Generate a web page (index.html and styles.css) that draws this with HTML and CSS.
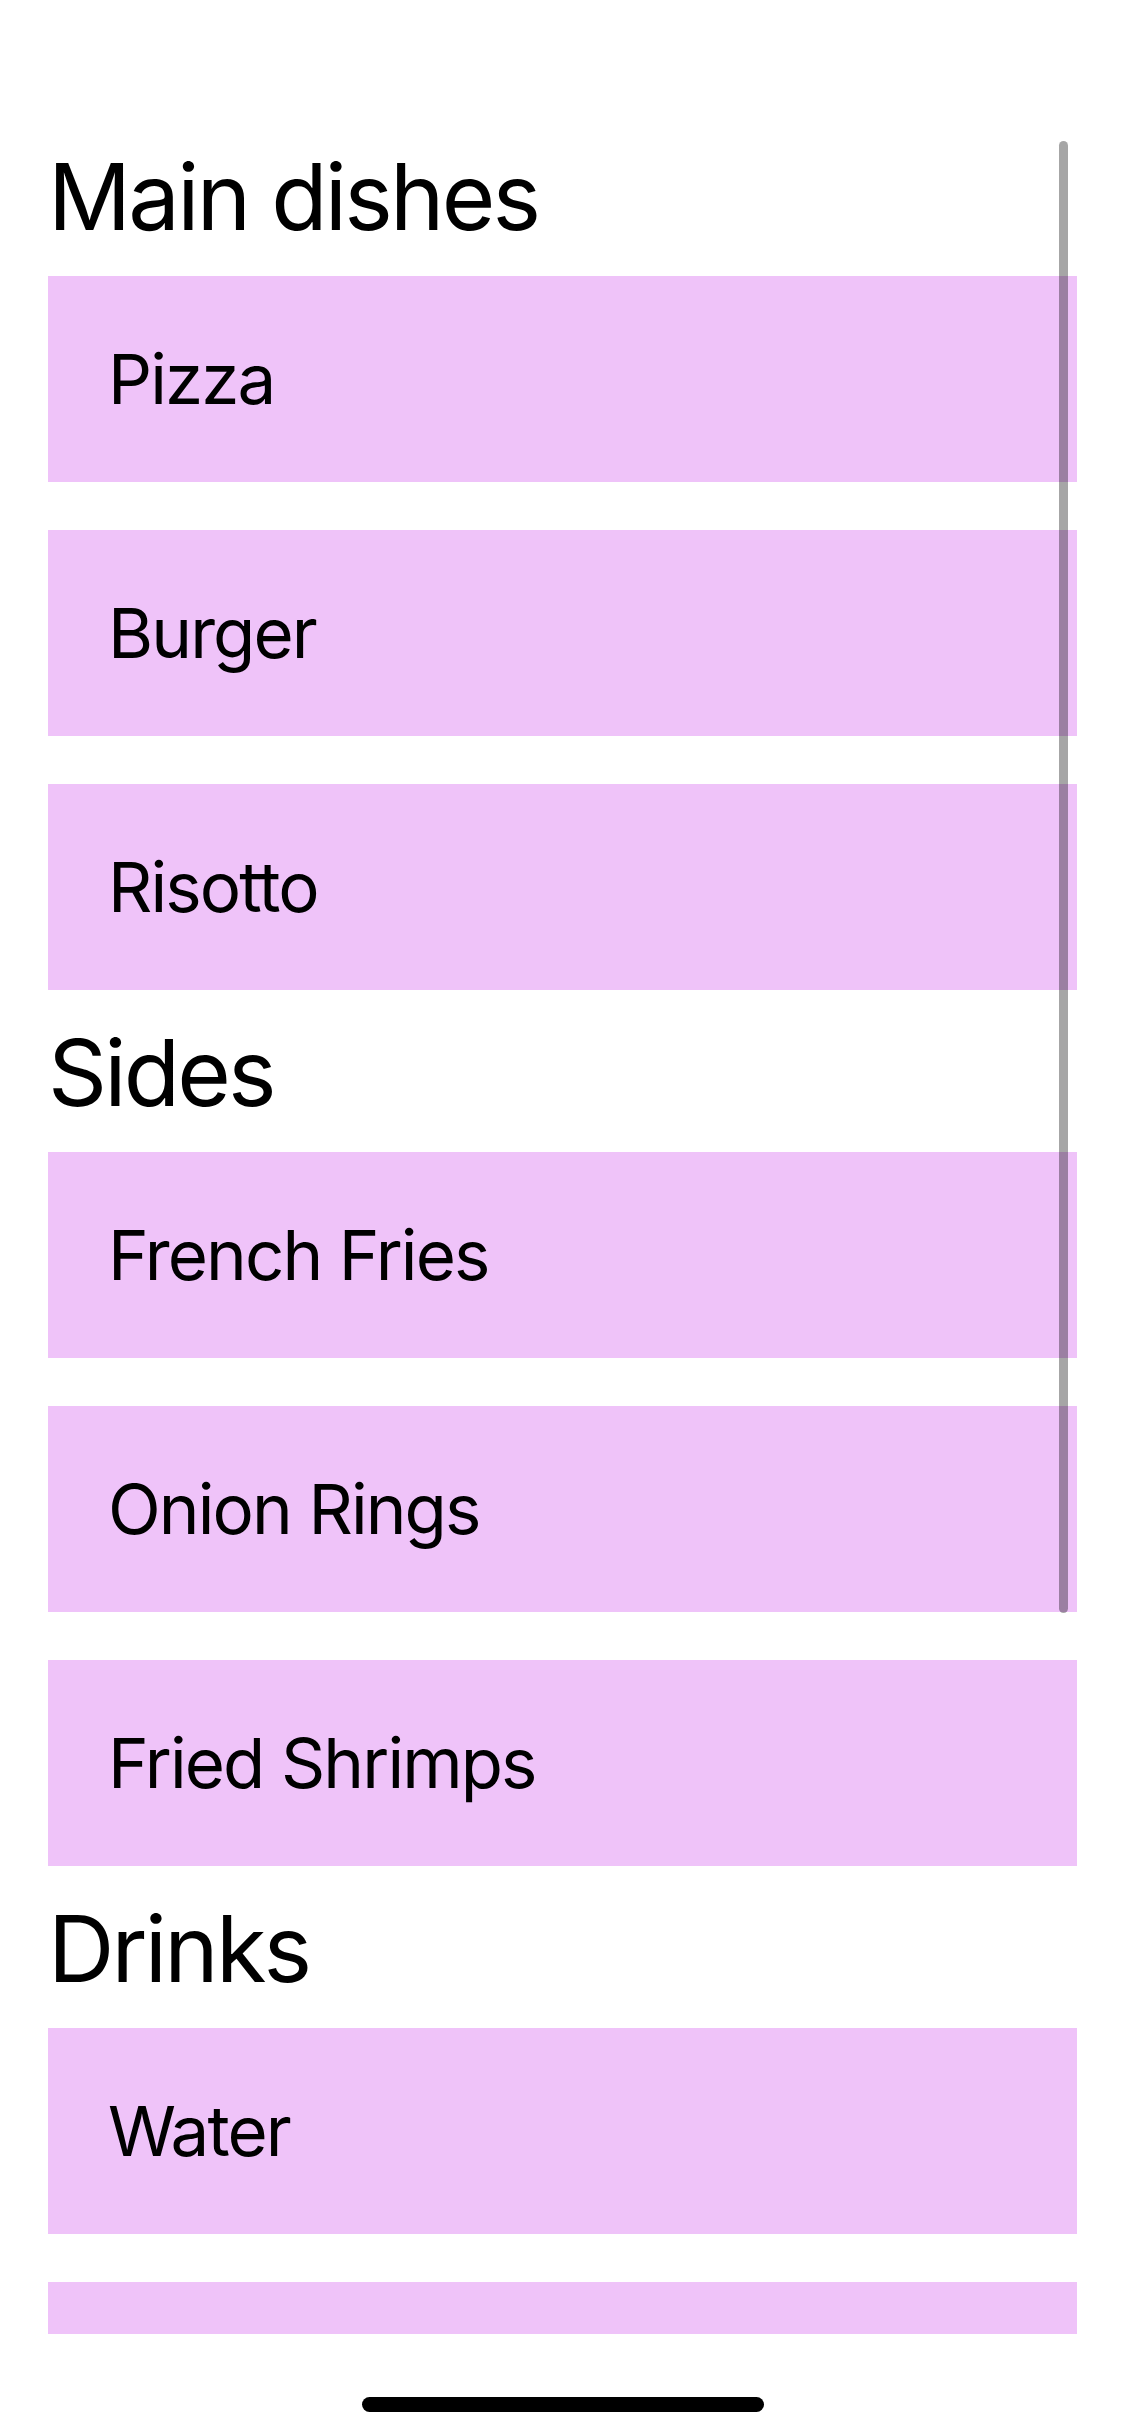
FILE: index.html
```html
<!DOCTYPE html>
<html lang="en">
<head>
<meta charset="utf-8">
<title>Menu</title>
<link rel="stylesheet" href="styles.css">
</head>
<body>
<div class="screen">
  <div class="safe-top"></div>
  <div class="scroll">
    <section class="section">
      <h2 class="section-title">Main dishes</h2>
      <div class="rows">
        <div class="row">Pizza</div>
        <div class="row">Burger</div>
        <div class="row">Risotto</div>
      </div>
    </section>
    <section class="section">
      <h2 class="section-title">Sides</h2>
      <div class="rows">
        <div class="row">French Fries</div>
        <div class="row">Onion Rings</div>
        <div class="row">Fried Shrimps</div>
      </div>
    </section>
    <section class="section">
      <h2 class="section-title">Drinks</h2>
      <div class="rows">
        <div class="row">Water</div>
        <div class="row"></div>
      </div>
    </section>
  </div>
  <div class="scrollbar"></div>
  <div class="safe-bottom">
    <div class="home-indicator"></div>
  </div>
</div>
</body>
</html>
```

FILE: styles.css
```css
html, body {
  margin: 0;
  padding: 0;
  background: #ffffff;
}

.screen {
  position: relative;
  width: 1125px;
  height: 2436px;
  display: flex;
  flex-direction: column;
  overflow: hidden;
  font-family: Inter, "Noto Sans", sans-serif;
  color: #000000;
}

.safe-top {
  height: 141px;
  flex: none;
}

.scroll {
  height: 2193px;
  flex: none;
  overflow: hidden;
  padding: 0 48px;
  display: flex;
  flex-direction: column;
  gap: 27px;
}

.section {
  display: flex;
  flex-direction: column;
}

.section-title {
  margin: 0 0 23px 0;
  font-size: 92px;
  line-height: 112px;
  height: 112px;
  font-weight: 400;
  letter-spacing: -2.8px;
}

.rows {
  display: flex;
  flex-direction: column;
  gap: 48px;
}

.row {
  height: 206px;
  flex: none;
  background: #efc3f9;
  display: flex;
  align-items: center;
  padding-left: 60px;
  font-size: 69px;
  font-weight: 400;
  letter-spacing: -1.9px;
}

.scrollbar {
  position: absolute;
  left: 1059px;
  top: 141px;
  width: 9px;
  height: 1472px;
  border-radius: 5px;
  background: rgba(0, 0, 0, 0.35);
}

.safe-bottom {
  flex: 1;
  display: flex;
  align-items: flex-end;
  justify-content: center;
  padding-bottom: 24px;
}

.home-indicator {
  width: 402px;
  height: 15px;
  border-radius: 8px;
  background: #000000;
}
```
